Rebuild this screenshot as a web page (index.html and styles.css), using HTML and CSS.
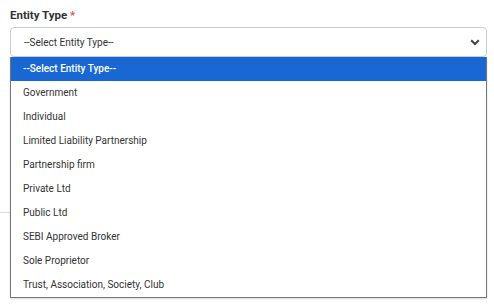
FILE: index.html
```html
<!DOCTYPE html>
<html>
<head>
<meta charset="utf-8">
<link rel="stylesheet" href="styles.css">
</head>
<body>
<div class="page">
  <div class="field">
    <label class="label">Entity Type <span class="req">*</span></label>
    <div class="select">
      <span class="select-text">--Select Entity Type--</span>
      <svg class="chev" width="10" height="7" viewBox="0 0 10 7"><path d="M1.2 1.3 L5 5 L8.8 1.3" fill="none" stroke="#444" stroke-width="2"/></svg>
    </div>
    <ul class="menu">
      <li class="opt selected">--Select Entity Type--</li>
      <li class="opt">Government</li>
      <li class="opt">Individual</li>
      <li class="opt">Limited Liability Partnership</li>
      <li class="opt">Partnership firm</li>
      <li class="opt">Private Ltd</li>
      <li class="opt">Public Ltd</li>
      <li class="opt">SEBI Approved Broker</li>
      <li class="opt">Sole Proprietor</li>
      <li class="opt">Trust, Association, Society, Club</li>
    </ul>
  </div>
  <div class="divider"></div>
</div>
</body>
</html>
```

FILE: styles.css
```css
* { box-sizing: border-box; }
html, body { margin: 0; padding: 0; background: #fff; }
body { font-family: Roboto, "Noto Sans", sans-serif; color: #333; width: 494px; height: 306px; overflow: hidden; }
.page { padding: 8px 7px 0 10px; }
.field { position: relative; }
.label { display: block; font-size: 11.5px; font-weight: 700; color: #333; line-height: 14px; height: 19px; }
.req { color: #d9534f; }
.select {
  height: 30px;
  border: 1px solid #ccc;
  border-radius: 4px;
  display: flex;
  align-items: center;
  justify-content: space-between;
  padding: 0 6px 0 13px;
  font-size: 10px;
  color: #333;
}
.chev { display: block; margin-top: 1px; }
.menu {
  position: absolute;
  left: 0; right: 0; top: 49px;
  margin: 0; padding: 0;
  list-style: none;
  background: #fff;
  border: 1px solid #767676;
  border-top: none;
  box-shadow: 0 1px 2px rgba(0,0,0,0.15);
  z-index: 2;
}
.opt { height: 24px; line-height: 24px; padding-left: 12px; font-size: 10px; color: #333; }
.opt.selected { background: #1967d2; color: #fff; font-weight: 500; }
.divider { margin-top: 155px; margin-left: -10px; border-top: 1px solid #ddd; }
```
